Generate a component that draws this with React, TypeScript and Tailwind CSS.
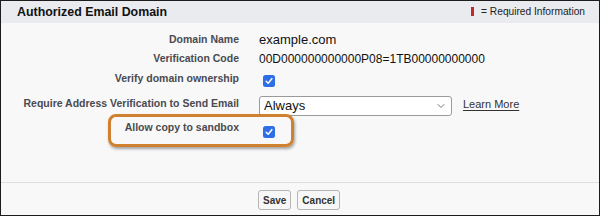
import { ChevronDown } from 'lucide-react';

const font = { fontFamily: '"Liberation Sans", Arial, sans-serif' };

function Check() {
  return (
    <span className="flex h-[12px] w-[12px] items-center justify-center rounded-[2.5px] bg-[#2f6fe6]">
      <svg viewBox="0 0 12 12" className="h-[10px] w-[10px]">
        <path d="M2.6 6.3 L5 8.6 L9.4 3.2" fill="none" stroke="#fff" strokeWidth="1.8" strokeLinecap="round" strokeLinejoin="round" />
      </svg>
    </span>
  );
}

function Label({ children, className = '' }: { children: React.ReactNode; className?: string }) {
  return (
    <div className={`w-[238px] shrink-0 text-right text-[10.5px] font-bold text-[#4a4a50] ${className}`}>{children}</div>
  );
}

export default function App() {
  return (
    <div
      className="relative flex h-[216px] w-[600px] flex-col border border-[#1c1c1c] bg-[#f8f8f8]"
      style={font}
    >
      {/* Header */}
      <div className="flex h-[22px] shrink-0 items-center justify-between bg-[#e9ebef] pl-[16px] pr-[14px]">
        <span className="text-[12.4px] font-bold text-[#111]">Authorized Email Domain</span>
        <div className="flex items-center gap-[7px]">
          <span className="h-[9px] w-[3px] bg-[#c2282a]" />
          <span className="text-[10.2px] text-[#222]">= Required Information</span>
        </div>
      </div>

      {/* Body */}
      <div className="flex flex-1 flex-col pt-[7px]">
        <div className="flex h-[19px] items-center">
          <Label>Domain Name</Label>
          <span className="ml-[20px] text-[13px] text-[#111]">example.com</span>
        </div>
        <div className="flex h-[19px] items-center">
          <Label>Verification Code</Label>
          <span className="ml-[20px] text-[12px] text-[#111]">00D000000000000P08=1TB00000000000</span>
        </div>
        <div className="flex h-[27px] items-start">
          <Label className="leading-[20px]">Verify domain ownership</Label>
          <span className="ml-[24px] mt-[7px]">
            <Check />
          </span>
        </div>
        <div className="flex h-[21px] items-start">
          <Label className="leading-[16px]">Require Address Verification to Send Email</Label>
          <div className="ml-[20px] mt-[1px] flex h-[20px] w-[193px] items-center justify-between rounded-[3px] border border-[#9a9a9a] bg-white pl-[4px] pr-[4px]">
            <span className="text-[13px] text-[#111]">Always</span>
            <ChevronDown size={12} strokeWidth={1.5} className="text-[#444]" />
          </div>
          <span className="ml-[11px] mt-[1px] text-[11px] leading-[16px] text-[#333] underline underline-offset-[2px]">
            Learn More
          </span>
        </div>
        <div className="flex items-start">
          <Label className="mt-[3px] leading-[16px]">Allow copy to sandbox</Label>
          <span className="ml-[24px] mt-[10px]">
            <Check />
          </span>
        </div>
      </div>

      {/* Footer */}
      <div className="flex h-[33px] shrink-0 items-start border-t border-[#dedede] pl-[257px] pt-[7px]">
        <div className="flex gap-[6px]">
          <button className="h-[20px] rounded-[3px] border border-[#b5b5b5] bg-[#f7f7f7] px-[4px] text-[10px] font-bold text-[#333]">
            Save
          </button>
          <button className="h-[20px] rounded-[3px] border border-[#b5b5b5] bg-[#f7f7f7] px-[4px] text-[10px] font-bold text-[#333]">
            Cancel
          </button>
        </div>
      </div>

      {/* Annotation */}
      <div className="pointer-events-none absolute left-[107px] top-[113px] h-[33px] w-[186px] rounded-[8px] border-[3px] border-[#d0812f] shadow-[1px_2px_3px_rgba(0,0,0,0.35)]" />
    </div>
  );
}
